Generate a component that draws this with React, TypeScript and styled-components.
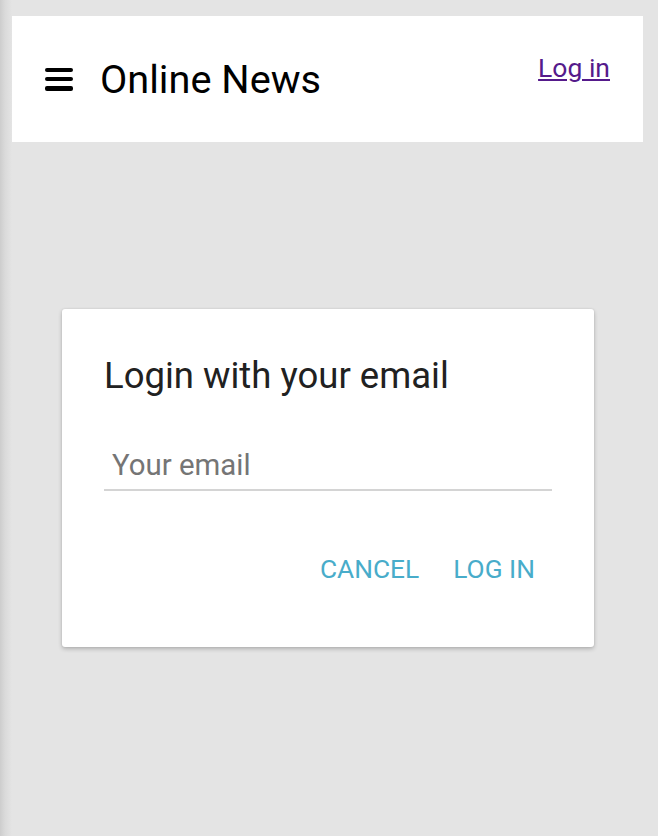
import React from "react";
import styled, { createGlobalStyle } from "styled-components";

const GlobalStyle = createGlobalStyle`
  html, body {
    margin: 0;
    padding: 0;
    height: 100%;
  }
  body {
    background: linear-gradient(to right, #cdcdcd 0, #dadada 5px, #e4e4e4 12px) #e4e4e4;
    font-family: Roboto, "Liberation Sans", sans-serif;
    overflow: hidden;
  }
`;

const Page = styled.div`
  padding: 16px 15px 0 12px;
  min-height: 836px;
  box-sizing: border-box;
`;

const Header = styled.header`
  height: 126px;
  background: #ffffff;
  display: flex;
  align-items: flex-start;
  padding: 0 33px 0 33px;
  box-sizing: border-box;
`;

const Brand = styled.div`
  display: flex;
  align-items: center;
  gap: 27px;
  height: 100%;
`;

const MenuButton = styled.button`
  border: 0;
  background: none;
  padding: 0;
  width: 28px;
  height: 23px;
  display: flex;
  flex-direction: column;
  justify-content: space-between;
  cursor: pointer;
`;

const MenuBar = styled.span`
  display: block;
  width: 28px;
  height: 4.5px;
  border-radius: 2px;
  background: #000;
`;

const Title = styled.h1`
  margin: 0;
  font-size: 39.7px;
  font-weight: 400;
  line-height: normal;
  color: #000;
`;

const LoginLink = styled.a`
  margin-left: auto;
  margin-top: 36px;
  font-size: 26.5px;
  line-height: normal;
  color: #551a8b;
  text-decoration: underline;
  text-decoration-thickness: 2px;
  text-underline-offset: 2px;
`;

const Dialog = styled.div`
  width: 532px;
  height: 338px;
  margin: 167px 0 0 50px;
  background: #fff;
  border-radius: 3px;
  box-shadow: 0 2px 4px rgba(0, 0, 0, 0.22), 0 0 2px rgba(0, 0, 0, 0.1);
  padding: 45px 42px 0 42px;
  box-sizing: border-box;
`;

const DialogTitle = styled.h2`
  margin: 0;
  font-size: 36.5px;
  font-weight: 400;
  line-height: normal;
  color: #212121;
`;

const EmailInput = styled.input`
  display: block;
  width: 100%;
  box-sizing: border-box;
  margin-top: 45px;
  border: 0;
  border-bottom: 2px solid #d4d4d4;
  padding: 6px 8px 7px;
  font-family: inherit;
  font-size: 29.4px;
  line-height: normal;
  color: #212121;
  outline: none;
  background: transparent;

  &::placeholder {
    color: #757575;
  }
`;

const Actions = styled.div`
  display: flex;
  justify-content: flex-end;
  gap: 34px;
  margin-top: 63px;
  padding-right: 17px;
`;

const TextButton = styled.button`
  border: 0;
  background: none;
  padding: 0;
  font-family: inherit;
  font-size: 26.3px;
  line-height: normal;
  color: #48acca;
  text-transform: uppercase;
  cursor: pointer;
`;

export default function App() {
  return (
    <>
      <GlobalStyle />
      <Page>
        <Header>
          <Brand>
            <MenuButton aria-label="menu">
              <MenuBar />
              <MenuBar />
              <MenuBar />
            </MenuButton>
            <Title>Online News</Title>
          </Brand>
          <LoginLink href="#">Log in</LoginLink>
        </Header>
        <Dialog>
          <DialogTitle>Login with your email</DialogTitle>
          <EmailInput type="email" placeholder="Your email" />
          <Actions>
            <TextButton>Cancel</TextButton>
            <TextButton>Log in</TextButton>
          </Actions>
        </Dialog>
      </Page>
    </>
  );
}
